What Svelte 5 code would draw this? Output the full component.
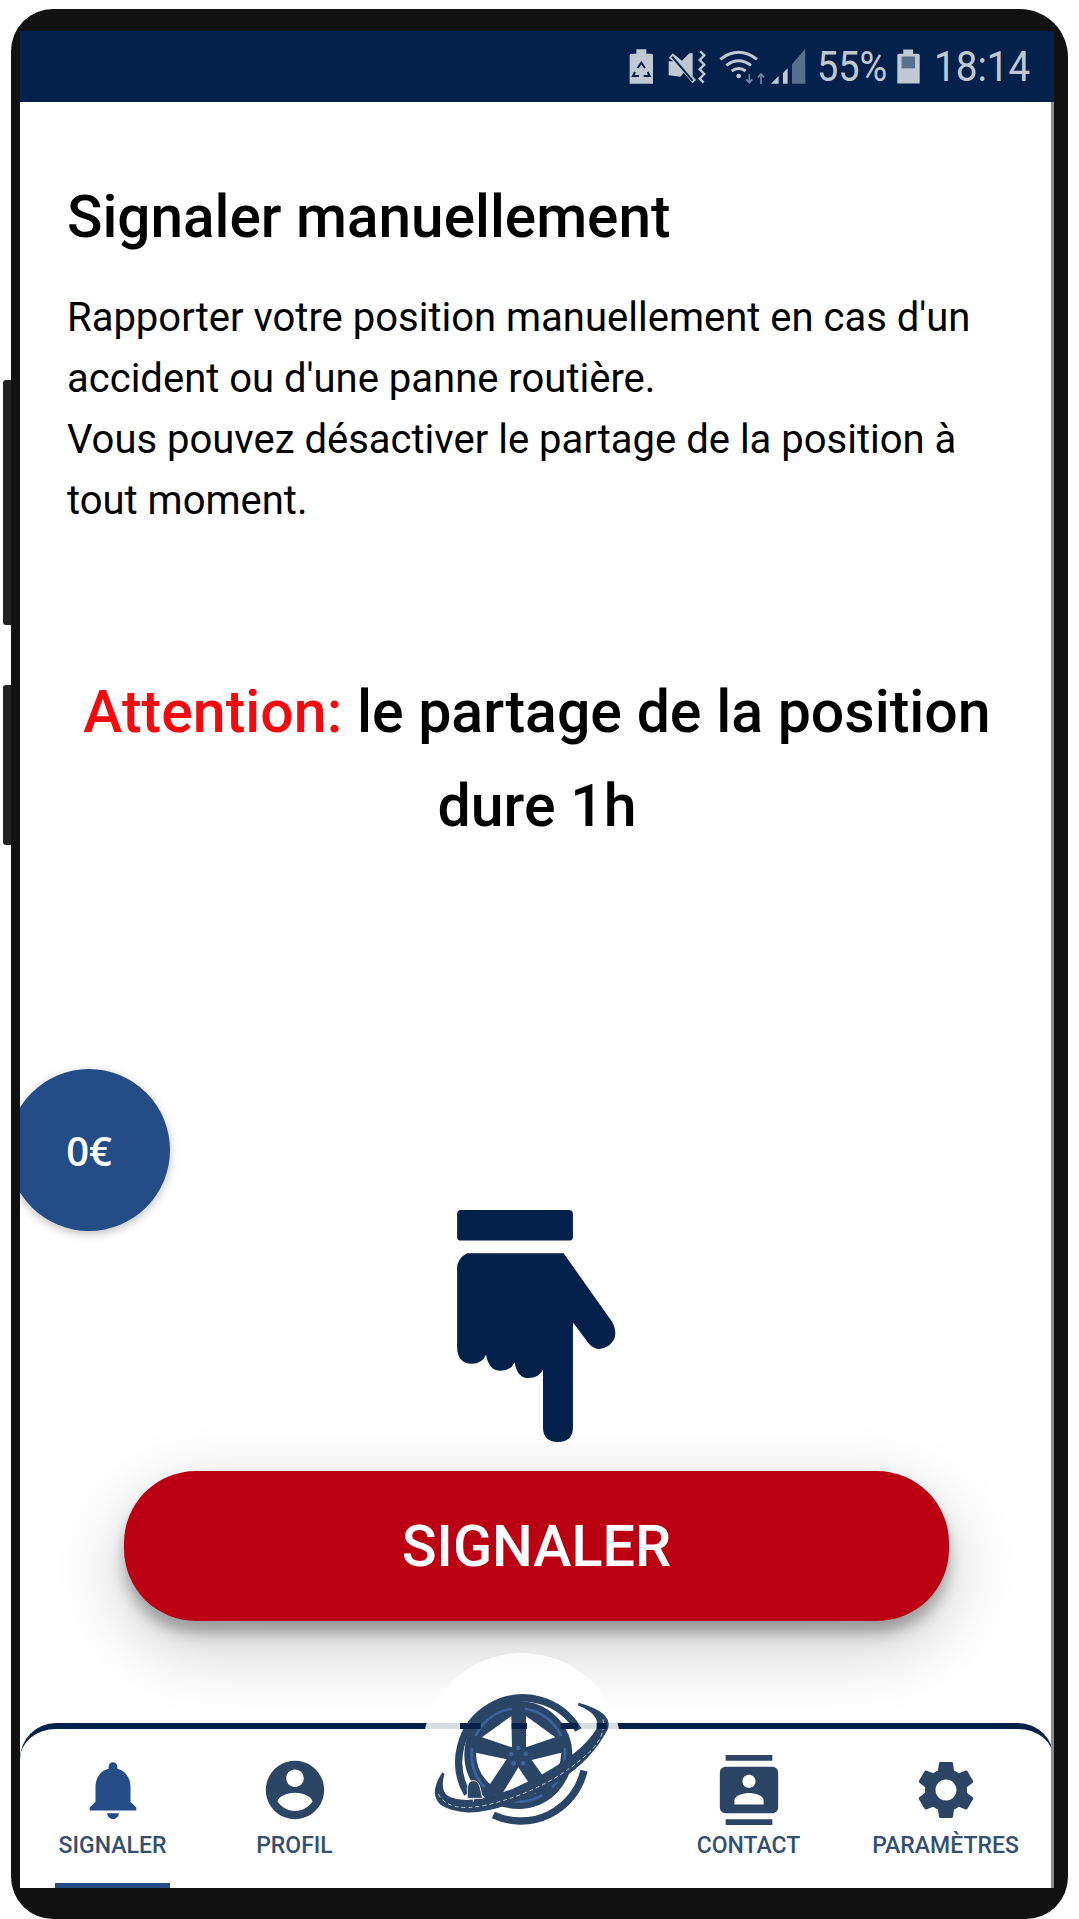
<script>
  const tabs = [
    { label: "SIGNALER", icon: "bell", active: true },
    { label: "PROFIL", icon: "profile" },
    { label: "", icon: "" },
    { label: "CONTACT", icon: "contact" },
    { label: "PARAMÈTRES", icon: "settings" }
  ];

  const paths = {
    bell: "M12 22c1.1 0 2-.9 2-2h-4c0 1.1.9 2 2 2zm6-6v-5c0-3.07-1.64-5.64-4.5-6.32V4c0-.83-.67-1.5-1.5-1.5s-1.5.67-1.5 1.5v.68C7.63 5.36 6 7.92 6 11v5l-2 2v1h16v-1l-2-2z",
    profile: "M12 2C6.48 2 2 6.48 2 12s4.48 10 10 10 10-4.48 10-10S17.52 2 12 2zm0 3c1.66 0 3 1.34 3 3s-1.34 3-3 3-3-1.34-3-3 1.34-3 3-3zm0 14.2c-2.5 0-4.71-1.28-6-3.22.03-1.99 4-3.08 6-3.08 1.99 0 5.97 1.09 6 3.08-1.29 1.94-3.5 3.22-6 3.22z",
    contact: "M20 0H4v2h16V0zM4 24h16v-2H4v2zM20 4H4c-1.1 0-2 .9-2 2v12c0 1.1.9 2 2 2h16c1.1 0 2-.9 2-2V6c0-1.1-.9-2-2-2zm-8 2.75c1.24 0 2.25 1.01 2.25 2.25s-1.01 2.25-2.25 2.25S9.75 10.24 9.75 9 10.76 6.75 12 6.75zM17 17H7v-1.5c0-1.67 3.33-2.5 5-2.5s5 .83 5 2.5V17z",
    settings: "M19.14 12.94c.04-.3.06-.61.06-.94 0-.32-.02-.64-.07-.94l2.03-1.58c.18-.14.23-.41.12-.61l-1.92-3.32c-.12-.22-.37-.29-.59-.22l-2.39.96c-.5-.38-1.03-.7-1.62-.94l-.36-2.54c-.04-.24-.24-.41-.48-.41h-3.84c-.24 0-.43.17-.47.41l-.36 2.54c-.59.24-1.13.57-1.62.94l-2.39-.96c-.22-.08-.47 0-.59.22L2.74 8.87c-.12.21-.08.47.12.61l2.03 1.58c-.05.3-.09.63-.09.94s.02.64.07.94l-2.03 1.58c-.18.14-.23.41-.12.61l1.92 3.32c.12.22.37.29.59.22l2.39-.96c.5.38 1.03.7 1.62.94l.36 2.54c.05.24.24.41.48.41h3.84c.24 0 .44-.17.47-.41l.36-2.54c.59-.24 1.13-.56 1.62-.94l2.39.96c.22.08.47 0 .59-.22l1.92-3.32c.12-.22.07-.47-.12-.61l-2.01-1.58zM12 15.6c-1.98 0-3.6-1.62-3.6-3.6s1.62-3.6 3.6-3.6 3.6 1.62 3.6 3.6-1.62 3.6-3.6 3.6z"
  };
</script>

<div class="phone">
  <div class="side-button side-button--top"></div>
  <div class="side-button side-button--bottom"></div>

  <div class="screen">
    <header class="status">
      <svg class="status__icons" viewBox="80 85 540 120" aria-hidden="true">
        <g fill="#c0c8d4">
          <path d="M88 110q0-5 5-5h15v-13h30v13h15q5 0 5 5v85h-70z" />
          <path d="M205 118l12-14 28 22 22-22h10v70l-22-18-15 18-35-4v-42h14zM225 112l62 72-10 10-62-72z" />
        </g>
        <g fill="none" stroke="#03214a" stroke-width="6">
          <path d="M112 148l11-16 11 16M104 160l-6 12h18M142 160l6 12h-18" />
        </g>
        <path d="M215 114l62 72" stroke="#03214a" stroke-width="6" />
        <path d="M300 98l12 12-14 14 14 14-14 14 14 14-14 14 12 12" fill="none" stroke="#c0c8d4" stroke-width="7" />
        <g fill="none" stroke="#c0c8d4" stroke-width="9">
          <path d="M360 122q55-42 110 0" />
          <path d="M378 140q37-28 74 0" />
          <path d="M394 157q21-15 42 0" />
        </g>
        <circle cx="415" cy="172" r="7" fill="#c0c8d4" />
        <path d="M447 166v24M438 182l9 10 9-10M482 196v-24M473 176l9-10 9 10" fill="none" stroke="#6f86a3" stroke-width="5" />
        <path d="M512 195l23-23v23zM548 195v-32l14-14v46z" fill="#c0c8d4" />
        <path d="M575 195v-58l40-47v105z" fill="#56708f" />
      </svg>
      <span class="status__text status__text--percent">55%</span>
      <svg class="status__battery" viewBox="895 85 85 120" aria-hidden="true">
        <path d="M902 110q0-5 5-5h13v-13h30v13h15q5 0 5 5v85h-68z" fill="#c0c8d4" />
        <rect x="915" y="113" width="41" height="36" fill="#56708f" />
      </svg>
      <span class="status__text status__text--time">18:14</span>
    </header>

    <main class="content">
      <h1 class="content__title">Signaler manuellement</h1>
      <p class="content__text">
        Rapporter votre position manuellement en cas d'un accident ou d'une panne routière.<br />
        Vous pouvez désactiver le partage de la position à tout moment.
      </p>
      <p class="content__warning"><span class="content__warning-label">Attention:</span> le partage de la position dure 1h</p>

      <svg class="hand" viewBox="80 60 480 700" aria-hidden="true">
        <rect x="80" y="60" width="348" height="92" rx="12" />
        <path d="M110 190H400L545 395Q570 440 535 468Q500 490 475 460L428 398V712Q428 757 383 757Q338 757 338 712V540Q325 565 295 565Q260 565 253 518Q240 543 210 543Q175 543 167 495Q155 522 125 522Q80 522 80 470V235Q80 205 110 190Z" />
      </svg>

      <button class="report-button">SIGNALER</button>
    </main>

    <div class="balance">0€</div>

    <nav class="tabs">
      <div class="tabs__halo"></div>
      {#each tabs as tab}
        {#if tab.icon}
          <div class="tab" class:tab--active={tab.active}>
            <svg class="tab__icon" viewBox="0 0 24 24" aria-hidden="true"><path d={paths[tab.icon]} /></svg>
            <span class="tab__label">{tab.label}</span>
          </div>
        {:else}
          <div></div>
        {/if}
      {/each}

      <svg class="logo" viewBox="0 0 660 570" aria-hidden="true">
        <path d="M505 240A190 190 0 1 0 172 432" fill="none" stroke="#2a4566" stroke-width="22" />
        <path d="M522 362A195 195 0 0 1 250 495" fill="none" stroke="#2a4566" stroke-width="22" />
        <circle cx="325" cy="315" r="162" fill="#2a4566" />
        <circle cx="325" cy="315" r="140" fill="none" stroke="#3a639f" stroke-width="8" />
        <g stroke="#2a4566" stroke-width="38">
          <path d="M325 315V160" />
          <path d="M325 315L480 270" />
          <path d="M325 315L425 440" />
          <path d="M325 315L225 440" />
          <path d="M325 315L170 270" />
        </g>
        <g fill="#fff">
          <path d="M304 198L216 262L306 292Z" />
          <path d="M348 198L436 262L348 292Z" />
          <path d="M198 308L290 328L240 402Q198 365 198 308Z" />
          <path d="M454 308L365 330L412 396Q452 362 454 308Z" />
          <path d="M325 352L274 436Q325 450 378 430Z" />
        </g>
        <g fill="#3a639f">
          <circle cx="325" cy="294" r="7" />
          <circle cx="304" cy="312" r="7" />
          <circle cx="347" cy="312" r="7" />
          <circle cx="311" cy="340" r="7" />
          <circle cx="340" cy="340" r="7" />
        </g>
        <path d="M100 370Q60 430 95 462Q170 510 320 450Q520 375 590 235Q605 190 505 162Q575 190 565 235Q510 330 310 420Q170 475 110 440Q85 420 100 370Z" fill="#2a4566" stroke="#2a4566" stroke-width="8" />
        <path d="M85 432Q115 490 230 465Q420 420 545 300Q590 250 578 205" fill="none" stroke="#c3ccd8" stroke-width="3" stroke-dasharray="12 9" />
        <path d="M172 412L172 445H218L210 412Q205 392 190 392Q175 392 172 412ZM190 445v10" fill="#2a4566" stroke="#dfe4ea" stroke-width="3" />
        <g fill="#03214a">
          <rect x="150" y="219" width="62" height="18" />
          <rect x="305" y="219" width="46" height="18" />
          <rect x="452" y="219" width="52" height="18" />
          <rect x="560" y="219" width="30" height="18" />
        </g>
      </svg>
    </nav>
  </div>
</div>

<style>
  :global(body) {
    margin: 0;
    background: #fff;
  }

  .phone {
    position: relative;
    box-sizing: border-box;
    width: 1057px;
    height: 1910px;
    margin: 9px 0 0 11px;
    padding: 22px 14px 31px 9px;
    background: #111;
    border-radius: 42px 48px 42px 42px;
    font-family: Roboto, "Liberation Sans", sans-serif;
  }

  .side-button {
    position: absolute;
    left: -8px;
    width: 8px;
    background: #222;
    border-radius: 3px 0 0 3px;
  }

  .side-button--top {
    top: 371px;
    height: 245px;
  }

  .side-button--bottom {
    top: 676px;
    height: 160px;
  }

  .screen {
    position: relative;
    display: flex;
    flex-direction: column;
    height: 100%;
    overflow: hidden;
    background: #fff;
  }

  .screen::after {
    content: "";
    position: absolute;
    top: 71px;
    right: 0;
    bottom: 0;
    width: 3px;
    background: #8a8a8a;
  }

  .status {
    display: flex;
    align-items: center;
    justify-content: flex-end;
    flex: none;
    height: 71px;
    padding-right: 27px;
    background: #03214a;
  }

  .status__icons {
    width: 180px;
    height: 40px;
    margin-right: 10px;
  }

  .status__battery {
    width: 28px;
    height: 40px;
    margin: 0 11px;
  }

  .status__text {
    display: inline-block;
    color: #c0c8d4;
    font-size: 42px;
    line-height: 1;
    white-space: nowrap;
    transform-origin: left center;
    transform: scaleX(0.9);
  }

  .status__text--percent {
    width: 67px;
  }

  .status__text--time {
    width: 93px;
    transform: scaleX(0.92);
  }

  .content {
    display: flex;
    flex-direction: column;
    flex: none;
    padding-top: 87px;
    color: #000;
  }

  .content__title {
    margin: 0;
    padding-left: 47px;
    font-size: 58.5px;
    font-weight: 500;
    line-height: 56px;
  }

  .content__text {
    margin: 42px 50px 0 47px;
    font-size: 40px;
    line-height: 61px;
  }

  .content__warning {
    margin: 134px 40px 0;
    font-size: 59px;
    font-weight: 500;
    line-height: 94px;
    text-align: center;
  }

  .content__warning-label {
    color: #f20a0f;
  }

  .hand {
    flex: none;
    align-self: flex-start;
    width: 160px;
    height: 233px;
    margin: 357px 0 0 437px;
    fill: #03214a;
  }

  .report-button {
    flex: none;
    align-self: flex-start;
    width: 825px;
    height: 150px;
    margin: 28px 0 0 104px;
    border: 0;
    border-radius: 72px;
    background: #bb0014;
    box-shadow: 0 12px 14px rgba(0, 0, 0, 0.28), 0 24px 70px rgba(0, 0, 0, 0.22);
    color: #fff;
    font-family: inherit;
    font-size: 57.5px;
    font-weight: 500;
  }

  .balance {
    position: absolute;
    top: 1038px;
    left: -12px;
    display: flex;
    align-items: center;
    justify-content: center;
    width: 162px;
    height: 162px;
    border-radius: 50%;
    background: #244c86;
    box-shadow: 0 3px 10px rgba(0, 0, 0, 0.25);
    color: #fff;
    font-family: "Open Sans", sans-serif;
    font-size: 40px;
    font-weight: 600;
  }

  .tabs {
    position: relative;
    display: grid;
    grid-template-columns: 115px 115px 1fr 115px 145px;
    column-gap: 67px;
    box-sizing: border-box;
    flex: none;
    height: 165px;
    margin-top: 102px;
    padding: 0 36px 0 35px;
    background: #fff;
    border-top: 6px solid #03214a;
    border-radius: 36px 36px 0 0;
  }

  .tabs__halo {
    position: absolute;
    top: -76px;
    left: 402px;
    width: 200px;
    height: 200px;
    border-radius: 50%;
    background: rgba(255, 255, 255, 0.85);
  }

  .tab {
    position: relative;
    display: flex;
    flex-direction: column;
    align-items: center;
    box-sizing: border-box;
    height: 159px;
    padding-top: 26px;
    color: #35506f;
    fill: #2c4565;
  }

  .tab--active {
    border-bottom: 5px solid #244c86;
    fill: #244c86;
  }

  .tab__icon {
    flex: none;
    width: 70px;
    height: 70px;
  }

  .tab__label {
    margin-top: 7px;
    font-size: 23px;
    font-weight: 500;
    white-space: nowrap;
  }

  .logo {
    position: absolute;
    top: -79px;
    left: 390px;
    width: 220px;
    height: 190px;
  }
</style>
